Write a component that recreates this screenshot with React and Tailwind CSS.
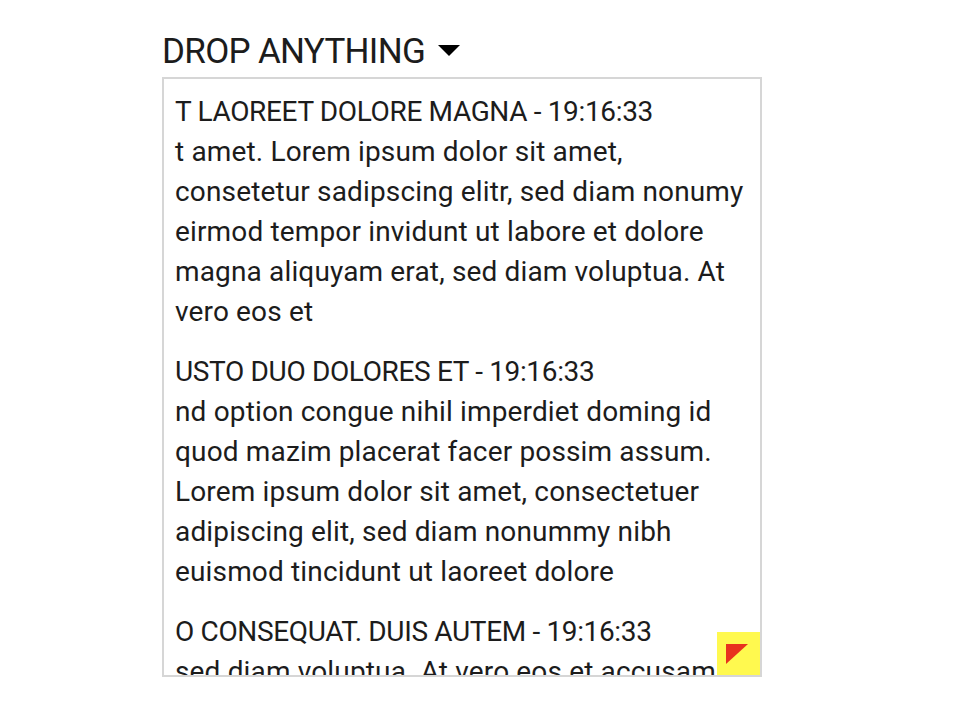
import React from 'react';

const entries = [
  {
    title: 'T LAOREET DOLORE MAGNA - 19:16:33',
    lines: [
      't amet. Lorem ipsum dolor sit amet,',
      'consetetur sadipscing elitr, sed diam nonumy',
      'eirmod tempor invidunt ut labore et dolore',
      'magna aliquyam erat, sed diam voluptua. At',
      'vero eos et',
    ],
  },
  {
    title: 'USTO DUO DOLORES ET - 19:16:33',
    lines: [
      'nd option congue nihil imperdiet doming id',
      'quod mazim placerat facer possim assum.',
      'Lorem ipsum dolor sit amet, consectetuer',
      'adipiscing elit, sed diam nonummy nibh',
      'euismod tincidunt ut laoreet dolore',
    ],
  },
  {
    title: 'O CONSEQUAT. DUIS AUTEM - 19:16:33',
    lines: ['sed diam voluptua. At vero eos et accusam'],
  },
];

const App = () => {
  return (
    <div className="min-h-screen bg-white pl-[162px] pt-[29px] font-['Roboto',sans-serif] text-[#1c1c1c]">
      {/* Title with dropdown caret */}
      <div className="flex items-center h-[46px]">
        <span className="text-[35px] leading-[46px] tracking-[-0.7px]">DROP ANYTHING</span>
        <svg width="22" height="11" viewBox="0 0 22 11" className="ml-[13px] mt-[-4px]">
          <polygon points="0,0 22,0 11,11" fill="#000" />
        </svg>
      </div>

      {/* Feed box */}
      <div className="relative mt-[2px] w-[600px] h-[600px] border-2 border-[#d6d6d6] overflow-hidden">
        <div className="px-[11px] pt-[13px] text-[28px] leading-[40px]">
          {entries.map((entry) => (
            <div key={entry.title} className="mb-[20px]">
              <div className="whitespace-nowrap tracking-[-0.35px]">{entry.title}</div>
              {entry.lines.map((line) => (
                <div key={line} className="whitespace-nowrap tracking-[0.15px]">{line}</div>
              ))}
            </div>
          ))}
        </div>
        <div className="absolute right-0 bottom-0 w-[43px] h-[43px] bg-[#fff94f] flex items-start">
          <svg width="22" height="20" viewBox="0 0 22 20" className="ml-[9px] mt-[12px]">
            <polygon points="0,0 22,0 0,20" fill="#e8321e" />
          </svg>
        </div>
      </div>
    </div>
  );
};

export default App;
